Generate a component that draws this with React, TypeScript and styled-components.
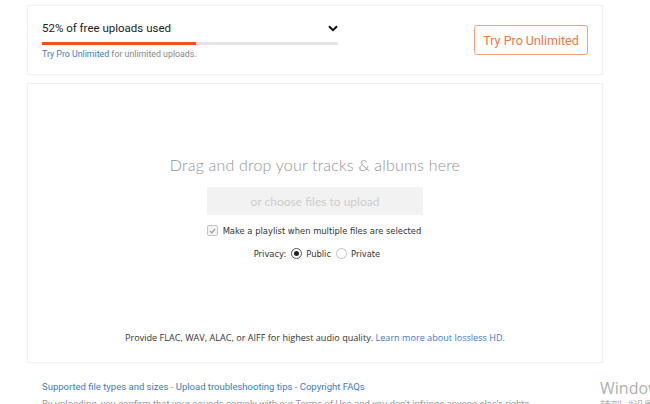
import React from 'react'
import styled, { createGlobalStyle } from 'styled-components'

const GlobalStyle = createGlobalStyle`
  body {
    margin: 0;
    background: #fff;
    font-family: "Liberation Sans", Arial, sans-serif;
    overflow: hidden;
  }
`

const Page = styled.div`
  position: relative;
  width: 650px;
  height: 404px;
  overflow: hidden;
  padding: 5px 0 0 27px;
  box-sizing: border-box;
`

const Column = styled.div`
  width: 576px;
`

const Card = styled.div`
  border: 1px solid #f0f0f0;
  box-shadow: 0 0 2px rgba(0, 0, 0, 0.03);
  box-sizing: border-box;
  background: #fff;
`

const QuotaCard = styled(Card)`
  height: 70px;
  display: flex;
  align-items: center;
  justify-content: space-between;
  padding: 0 14px 0 14px;
`

const Quota = styled.div`
  width: 296px;
`

const QuotaHead = styled.div`
  display: flex;
  align-items: center;
  justify-content: space-between;
  font-family: Roboto, sans-serif;
  font-size: 11.5px;
  color: #222;
`

const Bar = styled.div`
  margin-top: 7px;
  height: 3px;
  background: #e5e5e5;
`

const Fill = styled.div`
  height: 100%;
  background: #f2501c;
`

const QuotaNote = styled.div`
  margin-top: 4px;
  font-family: Roboto, sans-serif;
  font-size: 8.8px;
  color: #888;
`

const Link = styled.a`
  color: #3e7bc9;
  text-decoration: none;
`

const ProButton = styled.button`
  height: 30px;
  width: 114px;
  background: #fff;
  border: 1px solid #f4a27c;
  border-radius: 3px;
  color: #ef7845;
  font-family: Roboto, sans-serif;
  font-size: 12.5px;
  padding: 0;
`

const DropCard = styled(Card)`
  margin-top: 8px;
  height: 280px;
  display: flex;
  flex-direction: column;
  align-items: center;
  padding-top: 71px;
`

const DropTitle = styled.div`
  font-family: Lato, sans-serif;
  font-weight: 300;
  font-size: 16px;
  color: #959595;
  letter-spacing: 0.2px;
`

const ChooseButton = styled.button`
  margin-top: 13px;
  width: 216px;
  height: 28px;
  border: none;
  border-radius: 2px;
  background: #f2f2f2;
  color: #cdcdcd;
  font-family: Lato, sans-serif;
  font-size: 12px;
  padding: 0;
`

const Option = styled.label`
  display: flex;
  align-items: center;
  gap: 4px;
  font-family: "DejaVu Sans", sans-serif;
  font-size: 8.4px;
  color: #333;
`

const PlaylistRow = styled(Option)`
  margin-top: 10px;
  margin-left: -2px;
  gap: 5px;
`

const PrivacyRow = styled.div`
  margin-top: 12px;
  margin-left: 4px;
  display: flex;
  align-items: center;
  gap: 5px;
  font-family: "DejaVu Sans", sans-serif;
  font-size: 8.4px;
  color: #333;
`

const Box = styled.span`
  width: 9px;
  height: 9px;
  border: 1px solid #c4c4c4;
  border-radius: 2px;
  background: #f4f4f4;
  display: flex;
  align-items: center;
  justify-content: center;
`

const Radio = styled.span<{ $on?: boolean }>`
  width: 9px;
  height: 9px;
  border-radius: 50%;
  border: 1px solid ${p => (p.$on ? '#555' : '#c4c4c4')};
  background: #fff;
  display: flex;
  align-items: center;
  justify-content: center;
  &::after {
    content: '';
    width: 5px;
    height: 5px;
    border-radius: 50%;
    background: ${p => (p.$on ? '#222' : 'transparent')};
  }
`

const LosslessNote = styled.div`
  margin-top: auto;
  margin-bottom: 18px;
  font-family: "Open Sans", sans-serif;
  font-size: 9.1px;
  color: #333;
`

const HelpLinks = styled.div`
  margin-top: 18px;
  padding-left: 15px;
  font-family: Roboto, sans-serif;
  font-size: 9.5px;
  color: #888;
`

const CutLine = styled.div`
  margin-top: 6px;
  padding-left: 15px;
  font-family: Roboto, sans-serif;
  font-size: 9.5px;
  color: #999;
  white-space: nowrap;
`

const Watermark = styled.div`
  position: absolute;
  left: 600px;
  top: 378px;
  font-family: "Open Sans", sans-serif;
  font-size: 16px;
  line-height: 20px;
  color: #b0b0b0;
  white-space: nowrap;
`

const WatermarkSub = styled.div`
  font-family: "Noto Sans CJK SC", sans-serif;
  font-size: 11px;
  line-height: 14px;
`

export default function App(): React.ReactElement {
  const used = 52
  return (
    <Page>
      <GlobalStyle />
      <Column>
        <QuotaCard>
          <Quota>
            <QuotaHead>
              {used}% of free uploads used
              <svg width="10" height="7" viewBox="0 0 10 7">
                <path d="M1 1.2 L5 5.2 L9 1.2" fill="none" stroke="#111" strokeWidth="2" />
              </svg>
            </QuotaHead>
            <Bar>
              <Fill style={{ width: `${used}%` }} />
            </Bar>
            <QuotaNote>
              <Link>Try Pro Unlimited</Link> for unlimited uploads.
            </QuotaNote>
          </Quota>
          <ProButton>Try Pro Unlimited</ProButton>
        </QuotaCard>

        <DropCard>
          <DropTitle>Drag and drop your tracks &amp; albums here</DropTitle>
          <ChooseButton>or choose files to upload</ChooseButton>
          <PlaylistRow>
            <Box>
              <svg width="7" height="6" viewBox="0 0 7 6">
                <path d="M1 3 L2.8 4.8 L6 1" fill="none" stroke="#999" strokeWidth="1.2" />
              </svg>
            </Box>
            Make a playlist when multiple files are selected
          </PlaylistRow>
          <PrivacyRow>
            Privacy:
            <Option>
              <Radio $on />
              Public
            </Option>
            <Option>
              <Radio />
              Private
            </Option>
          </PrivacyRow>
          <LosslessNote>
            Provide FLAC, WAV, ALAC, or AIFF for highest audio quality.{' '}
            <Link>Learn more about lossless HD.</Link>
          </LosslessNote>
        </DropCard>

        <HelpLinks>
          <Link>Supported file types and sizes</Link> - <Link>Upload troubleshooting tips</Link> -{' '}
          <Link>Copyright FAQs</Link>
        </HelpLinks>
        <CutLine>
          By uploading, you confirm that your sounds comply with our Terms of Use and you don't infringe anyone else's rights.
        </CutLine>
      </Column>
      <Watermark>
        Windows
        <WatermarkSub>转到“设置”以激活 Windows。</WatermarkSub>
      </Watermark>
    </Page>
  )
}
